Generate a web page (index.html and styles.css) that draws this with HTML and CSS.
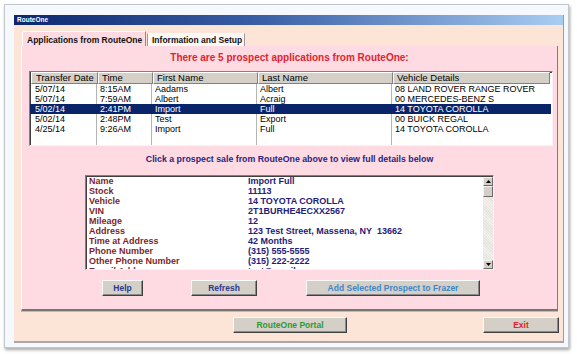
FILE: index.html
```html
<!DOCTYPE html>
<html>
<head>
<meta charset="utf-8">
<link rel="stylesheet" href="styles.css">
</head>
<body>
<div class="frame">
  <div class="window">
    <div class="titlebar">RouteOne</div>
    <div class="client">
      <div class="tabs">
        <div class="tab active">Applications from RouteOne</div>
        <div class="tab inactive">Information and Setup</div>
      </div>
      <div class="panel">
        <div class="heading">There are 5 prospect applications from RouteOne:</div>
        <div class="list">
          <div class="lrow head">
            <div class="c">Transfer Date</div><div class="c">Time</div><div class="c">First Name</div><div class="c">Last Name</div><div class="c">Vehicle Details</div>
          </div>
          <div class="lrow">
            <div class="c">5/07/14</div><div class="c">8:15AM</div><div class="c">Aadams</div><div class="c">Albert</div><div class="c">08 LAND ROVER RANGE ROVER</div>
          </div>
          <div class="lrow">
            <div class="c">5/07/14</div><div class="c">7:59AM</div><div class="c">Albert</div><div class="c">Acraig</div><div class="c">00 MERCEDES-BENZ S</div>
          </div>
          <div class="lrow sel">
            <div class="c">5/02/14</div><div class="c">2:41PM</div><div class="c">Import</div><div class="c">Full</div><div class="c">14 TOYOTA COROLLA</div>
          </div>
          <div class="lrow">
            <div class="c">5/02/14</div><div class="c">2:48PM</div><div class="c">Test</div><div class="c">Export</div><div class="c">00 BUICK REGAL</div>
          </div>
          <div class="lrow">
            <div class="c">4/25/14</div><div class="c">9:26AM</div><div class="c">Import</div><div class="c">Full</div><div class="c">14 TOYOTA COROLLA</div>
          </div>
          <div class="lrow filler">
            <div class="c"></div><div class="c"></div><div class="c"></div><div class="c"></div><div class="c"></div>
          </div>
        </div>
        <div class="hint">Click a prospect sale from RouteOne above to view full details below</div>
        <div class="details">
          <div class="dlist">
            <div class="lbl">Name</div><div class="val">Import Full</div>
            <div class="lbl">Stock</div><div class="val">11113</div>
            <div class="lbl">Vehicle</div><div class="val">14 TOYOTA COROLLA</div>
            <div class="lbl">VIN</div><div class="val">2T1BURHE4ECXX2567</div>
            <div class="lbl">Mileage</div><div class="val">12</div>
            <div class="lbl">Address</div><div class="val">123 Test Street, Massena, NY&nbsp; 13662</div>
            <div class="lbl">Time at Address</div><div class="val">42 Months</div>
            <div class="lbl">Phone Number</div><div class="val">(315) 555-5555</div>
            <div class="lbl">Other Phone Number</div><div class="val">(315) 222-2222</div>
            <div class="lbl">E-mail Address</div><div class="val">test@email.com</div>
          </div>
          <div class="vscroll">
            <div class="sbtn"><svg width="5" height="3" viewBox="0 0 5 3"><path d="M0 3H5L2.5 0Z" fill="#000"/></svg></div>
            <div class="thumb"></div>
            <div class="track"></div>
            <div class="sbtn"><svg width="5" height="3" viewBox="0 0 5 3"><path d="M0 0H5L2.5 3Z" fill="#000"/></svg></div>
          </div>
        </div>
        <div class="btnrow">
          <div class="btn b-help">Help</div>
          <div class="btn b-refresh">Refresh</div>
          <div class="btn b-add">Add Selected Prospect to Frazer</div>
        </div>
      </div>
      <div class="bottomrow">
        <div class="btn b-portal">RouteOne Portal</div>
        <div class="btn b-exit">Exit</div>
      </div>
    </div>
  </div>
</div>
</body>
</html>
```
FILE: styles.css
```css
* { box-sizing: border-box; }
html, body { margin: 0; padding: 0; }
body {
  width: 577px;
  height: 354px;
  overflow: hidden;
  background: #ffffff;
  font-family: "Liberation Sans", Arial, sans-serif;
}
.frame {
  margin: 4px 0 0 4px;
  width: 565px;
  height: 344px;
  border: 1px solid #c3c6ca;
  background: #f5f8fc;
  box-shadow: 1px 2px 3px rgba(0, 0, 0, 0.35);
  padding: 10px 0 0 9px;
}
.window {
  width: 550px;
  height: 328px;
  display: flex;
  flex-direction: column;
  border-right: 1px solid #9c9c9c;
  border-bottom: 2px solid #a6a6a6;
  background: #fce4d6;
}
.titlebar {
  height: 10px;
  background: linear-gradient(to right, #0c2770 0%, #3a5fa6 45%, #a9cdf2 100%);
  color: #fff;
  font-size: 6.5px;
  font-weight: bold;
  line-height: 10px;
  padding-left: 3px;
}
.client {
  flex: 1;
  padding: 6px 0 0 7px;
  display: flex;
  flex-direction: column;
}
.tabs {
  display: flex;
  height: 15px;
  align-items: flex-end;
}
.tab {
  font-size: 8.5px;
  font-weight: bold;
  color: #111;
  padding-left: 4px;
  white-space: nowrap;
}
.tab.active {
  margin-left: 1px;
  width: 124px;
  height: 15px;
  line-height: 16px;
  background: #fedbe2;
  border-top: 1px solid #fff;
  border-left: 1px solid #fff;
  border-right: 1px solid #8a8a8a;
}
.tab.inactive {
  margin-left: 1px;
  width: 98px;
  height: 13px;
  line-height: 13px;
  background: #fff7f5;
  border-left: 1px solid #9a9a9a;
  border-right: 1px solid #9a9a9a;
  border-top: 1px solid #fff;
}
.panel {
  width: 537px;
  height: 265px;
  background: #fedbe2;
  border-left: 1px solid #fff;
  border-right: 1px solid #7d7d7d;
  border-bottom: 2px solid #767676;
  box-shadow: 0 1px 0 #c8b4b0;
  display: flex;
  flex-direction: column;
}
.heading {
  margin-top: 6px;
  height: 12px;
  line-height: 12px;
  text-align: center;
  color: #e3222e;
  font-size: 10px;
  font-weight: bold;
}
.list {
  margin: 7px 0 0 7px;
  width: 524px;
  height: 75px;
  background: #fff;
  border: 1px solid;
  border-color: #808080 #f4f4f4 #f4f4f4 #808080;
  box-shadow: inset 1px 1px 0 #404040;
  display: flex;
  flex-direction: column;
  padding: 0 1px 0 0;
}
.lrow {
  display: grid;
  grid-template-columns: 67px 55px 105px 135px 159px;
  height: 10px;
  font-size: 9px;
  line-height: 10px;
  color: #000;
}
.lrow .c {
  padding-left: 3px;
  border-right: 1px solid #b4b4b4;
  white-space: nowrap;
  overflow: hidden;
}
.lrow .c:first-child { padding-left: 5px; }
.lrow .c:last-child { border-right: none; }
.lrow.head {
  height: 12px;
  line-height: 10px;
  font-size: 9.5px;
  margin-left: 1px;
}
.lrow.head .c {
  background: #d4d0c8;
  border-top: 1px solid #fff;
  border-left: 1px solid #fff;
  border-right: 1px solid #808080;
  border-bottom: 1px solid #808080;
  padding-left: 3px;
}
.lrow.head .c:first-child { padding-left: 4px; }
.lrow.head .c:last-child { border-right: 1px solid #808080; margin-right: 2px; }
.lrow.sel .c {
  background: #0a246a;
  color: #fff;
  border-right-color: #0a246a;
}
.lrow.filler { flex: 1; height: auto; }
.hint {
  margin-top: 7px;
  height: 12px;
  line-height: 12px;
  text-align: center;
  color: #2a2380;
  font-size: 8.8px;
  font-weight: bold;
}
.details {
  margin: 10px 0 0 63px;
  width: 409px;
  height: 95px;
  background: #fff;
  border: 1px solid;
  border-color: #808080 #f4f4f4 #f4f4f4 #808080;
  box-shadow: inset 1px 1px 0 #404040;
  display: flex;
  overflow: hidden;
}
.dlist {
  flex: 1;
  display: grid;
  grid-template-columns: 159px 1fr;
  grid-auto-rows: 10px;
  padding-left: 3px;
  font-size: 9px;
  font-weight: bold;
  line-height: 10px;
  overflow: hidden;
  white-space: nowrap;
}
.lbl { color: #7c1f28; }
.val { color: #1f2078; }
.vscroll {
  width: 10px;
  display: flex;
  flex-direction: column;
  background: #ebe9e5;
  margin-top: 1px;
}
.sbtn {
  height: 9px;
  background: #d4d0c8;
  border: 1px solid;
  border-color: #f4f4f4 #6a6a6a #6a6a6a #f4f4f4;
  display: flex;
  align-items: center;
  justify-content: center;
}
.thumb {
  height: 11px;
  background: #d4d0c8;
  border: 1px solid;
  border-color: #f4f4f4 #6a6a6a #6a6a6a #f4f4f4;
}
.track {
  flex: 1;
  background: repeating-linear-gradient(45deg, #e6e4e0 0 1px, #f2f1ee 1px 2px);
}
.btnrow {
  margin-top: 10px;
  padding-left: 80px;
  display: flex;
}
.btn {
  height: 16px;
  background: #d4d0c8;
  border: 1px solid;
  border-color: #fbfbfb #404040 #404040 #fbfbfb;
  box-shadow: inset -1px -1px 0 #8a8a8a;
  font-size: 8.5px;
  font-weight: bold;
  line-height: 14px;
  text-align: center;
  white-space: nowrap;
}
.b-help { width: 41px; color: #2b3990; }
.b-refresh { width: 66px; margin-left: 48px; color: #2b3990; }
.b-add { width: 174px; margin-left: 49px; color: #3f86c8; }
.bottomrow {
  margin-top: 6px;
  display: flex;
  padding-left: 212px;
}
.b-portal { width: 114px; color: #2c9a36; }
.b-exit { width: 76px; margin-left: 136px; color: #e4202c; }
```
